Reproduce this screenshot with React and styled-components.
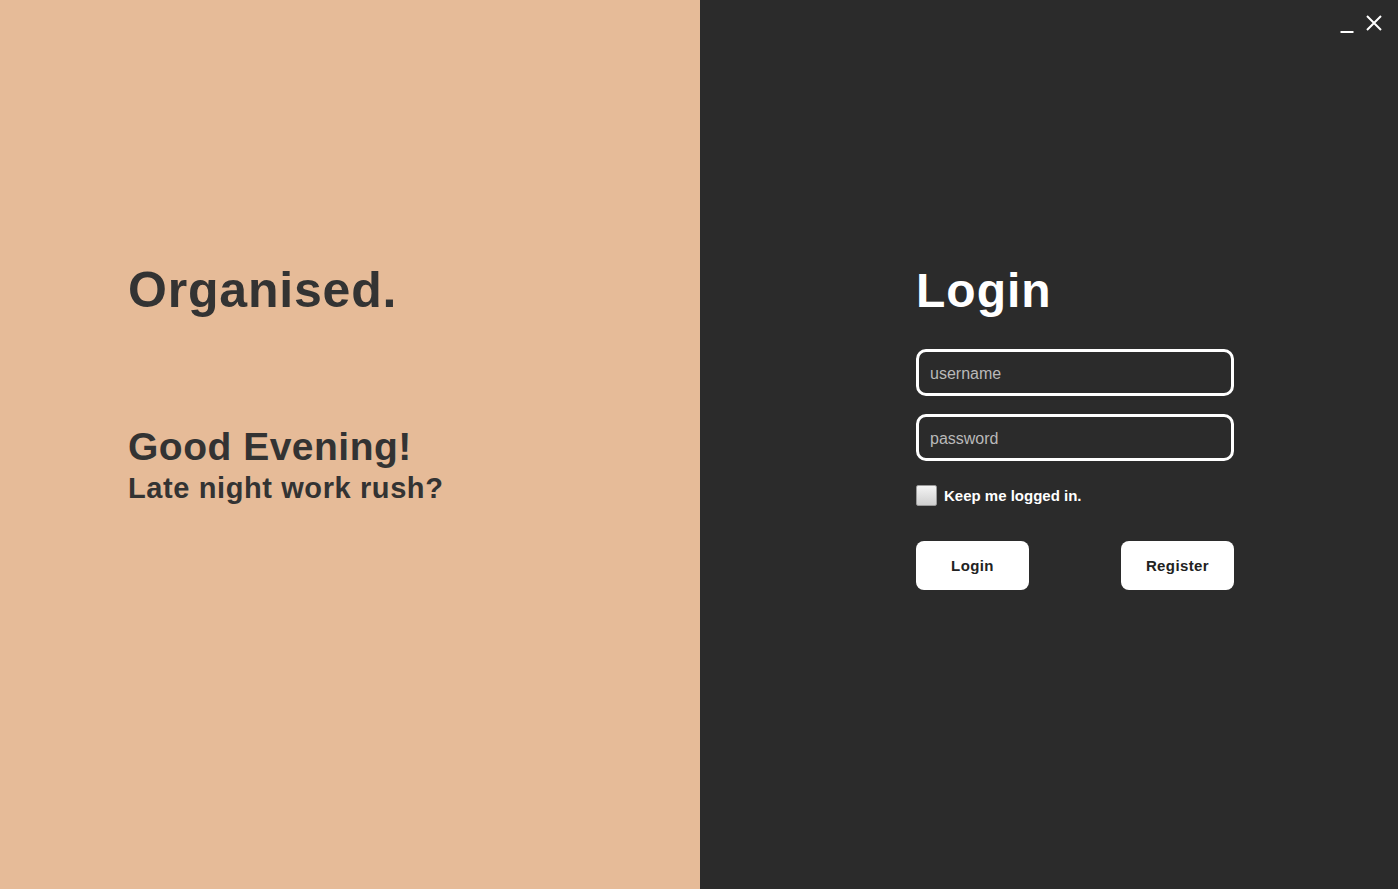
import React from 'react';
import styled, { createGlobalStyle } from 'styled-components';

const GlobalStyle = createGlobalStyle`
  html, body {
    margin: 0;
    padding: 0;
    height: 100%;
  }
  body {
    font-family: "Liberation Sans", Arial, sans-serif;
  }
  #root {
    height: 100%;
  }
`;

const Page = styled.div`
  position: relative;
  display: flex;
  width: 100%;
  height: 889px;
  overflow: hidden;
`;

const Greeting = styled.section`
  width: 700px;
  flex-shrink: 0;
  background-color: #e6bb98;
  color: #333333;
  padding: 265px 0 0 128px;
  box-sizing: border-box;
  display: flex;
  flex-direction: column;
`;

const Brand = styled.h1`
  margin: 0;
  font-size: 50px;
  line-height: 1;
  font-weight: 700;
  letter-spacing: 0.8px;
`;

const Hello = styled.h2`
  margin: 112px 0 0 0;
  font-size: 39px;
  line-height: 1;
  font-weight: 700;
  letter-spacing: 0.5px;
`;

const Sub = styled.h3`
  margin: 8px 0 0 0;
  font-size: 29px;
  line-height: 1;
  font-weight: 700;
  letter-spacing: 0.6px;
`;

const Panel = styled.section`
  flex: 1;
  background-color: #2b2b2b;
  padding: 267px 0 0 216px;
  box-sizing: border-box;
`;

const Form = styled.form`
  width: 318px;
  display: flex;
  flex-direction: column;
`;

const Title = styled.h1`
  margin: 0 0 34px 0;
  color: #ffffff;
  font-size: 48px;
  line-height: 1;
  font-weight: 700;
  letter-spacing: 1px;
`;

const Field = styled.input`
  height: 47px;
  box-sizing: border-box;
  border: 3px solid #ffffff;
  border-radius: 10px;
  background: transparent;
  color: #ffffff;
  font-family: "Liberation Sans", Arial, sans-serif;
  font-size: 16px;
  padding: 2px 11px 0;
  margin-bottom: ${p => p.$gap}px;
  outline: none;
  &::placeholder {
    color: #b9b9b9;
  }
`;

const CheckRow = styled.label`
  display: flex;
  align-items: center;
  gap: 7px;
  height: 22px;
  margin-bottom: 35px;
  color: #ffffff;
  font-size: 15px;
  font-weight: 700;
`;

const Box = styled.span`
  width: 19px;
  height: 19px;
  border: 1px solid #9a9a9a;
  border-radius: 2px;
  background: linear-gradient(#f4f4f4, #cfcfcf);
`;

const Buttons = styled.div`
  display: flex;
  justify-content: space-between;
`;

const Button = styled.button`
  width: 113px;
  height: 49px;
  border: none;
  border-radius: 8px;
  background: #ffffff;
  color: #222222;
  font-family: "Liberation Sans", Arial, sans-serif;
  font-size: 15px;
  font-weight: 700;
  letter-spacing: 0.4px;
  cursor: pointer;
`;

const WindowControls = styled.div`
  position: absolute;
  top: 14px;
  right: 16px;
  display: flex;
  align-items: flex-end;
  gap: 12px;
`;

const Control = styled.button`
  background: none;
  border: none;
  padding: 0;
  display: flex;
  cursor: pointer;
`;

export default function App() {
  return (
    <>
      <GlobalStyle />
      <Page>
        <Greeting>
          <Brand>Organised.</Brand>
          <Hello>Good Evening!</Hello>
          <Sub>Late night work rush?</Sub>
        </Greeting>
        <Panel>
          <Form onSubmit={e => e.preventDefault()}>
            <Title>Login</Title>
            <Field placeholder="username" $gap={18} />
            <Field placeholder="password" type="password" $gap={23} />
            <CheckRow>
              <Box />
              Keep me logged in.
            </CheckRow>
            <Buttons>
              <Button type="submit">Login</Button>
              <Button type="button">Register</Button>
            </Buttons>
          </Form>
        </Panel>
        <WindowControls>
          <Control aria-label="minimise">
            <svg width="14" height="20" viewBox="0 0 14 20">
              <line x1="0.5" y1="18" x2="13.5" y2="18" stroke="#ffffff" strokeWidth="2" />
            </svg>
          </Control>
          <Control aria-label="close">
            <svg width="16" height="20" viewBox="0 0 16 20">
              <path d="M1 2 L15 16 M15 2 L1 16" stroke="#ffffff" strokeWidth="2" fill="none" />
            </svg>
          </Control>
        </WindowControls>
      </Page>
    </>
  );
}
